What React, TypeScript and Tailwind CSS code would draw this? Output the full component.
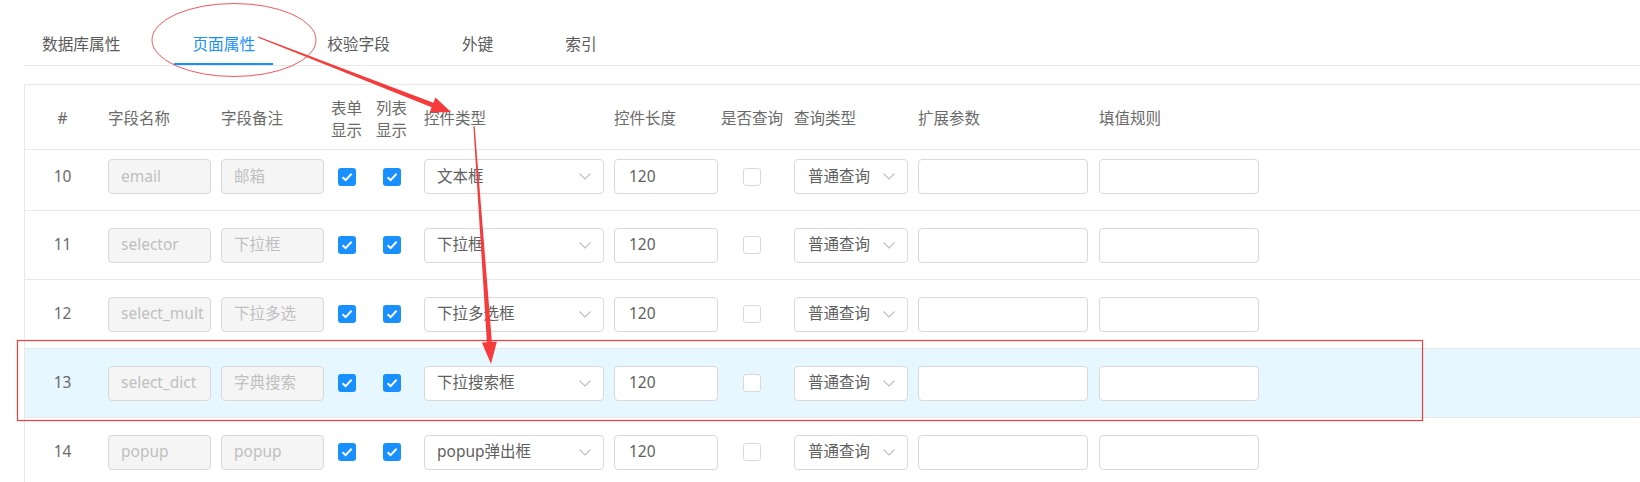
import React from "react";

type Row = { no: number; name: string; note: string; type: string; active?: boolean };

const rows: Row[] = [
  { no: 10, name: "email", note: "邮箱", type: "文本框" },
  { no: 11, name: "selector", note: "下拉框", type: "下拉框" },
  { no: 12, name: "select_mult", note: "下拉多选", type: "下拉多选框" },
  { no: 13, name: "select_dict", note: "字典搜索", type: "下拉搜索框", active: true },
  { no: 14, name: "popup", note: "popup", type: "popup弹出框" },
];

const tabs = ["数据库属性", "页面属性", "校验字段", "外键", "索引"];

function Check({ on }: { on: boolean }) {
  if (!on) return <span className="block h-[18px] w-[18px] rounded-[3px] border border-[#d9d9d9] bg-white" />;
  return (
    <span className="flex h-[18px] w-[18px] items-center justify-center rounded-[3px] bg-[#1890ff]">
      <svg width="12" height="10" viewBox="0 0 12 10">
        <path d="M1.6 5.2 4.6 8.1 10.6 1.8" fill="none" stroke="white" strokeWidth="2" />
      </svg>
    </span>
  );
}

function Arrow() {
  return (
    <svg width="12" height="7" viewBox="0 0 12 7" className="shrink-0">
      <polyline points="0.5,0.5 6,6 11.5,0.5" fill="none" stroke="#bfbfbf" strokeWidth="1.1" />
    </svg>
  );
}

function Box({ children, disabled, className = "" }: { children?: React.ReactNode; disabled?: boolean; className?: string }) {
  return (
    <div
      className={`flex h-[35px] items-center overflow-hidden whitespace-nowrap rounded-[4px] border border-[#d9d9d9] ${
        disabled ? "bg-[#f5f5f5] text-[#c0c0c0]" : "bg-white text-[#5f5f5f]"
      } ${className}`}
    >
      {children}
    </div>
  );
}

export default function App() {
  return (
    <div className="relative h-[482px] w-[1640px] overflow-hidden bg-white pl-[24px] pt-[23px] text-[15.5px] text-[#6a6a6a] font-['Noto_Sans','Noto_Sans_CJK_SC',sans-serif]">
      {/* tabs */}
      <div className="flex border-b border-[#e8e8e8]">
        {tabs.map((t, i) => (
          <div
            key={t}
            className={`relative mr-[36px] px-[18px] py-[9px] text-[15.7px] leading-[24px] ${i === 1 ? "text-[#1890ff]" : "text-[#5a5a5a]"}`}
          >
            {t}
            {i === 1 && <span className="absolute bottom-0 left-0 right-0 h-[2px] bg-[#1890ff]" />}
          </div>
        ))}
      </div>

      {/* table */}
      <div className="mt-[18px] border-l border-t border-[#e8e8e8]">
        <div className="flex h-[65px] items-center border-b border-[#e8e8e8] pt-[4px]">
          <div className="w-[75px] shrink-0 text-center">#</div>
          <div className="ml-[8px] w-[103px] shrink-0">字段名称</div>
          <div className="ml-[10px] w-[103px] shrink-0">字段备注</div>
          <div className="w-[45px] shrink-0 text-center leading-[22px]">表单<br />显示</div>
          <div className="w-[45px] shrink-0 text-center leading-[22px]">列表<br />显示</div>
          <div className="ml-[10px] w-[180px] shrink-0">控件类型</div>
          <div className="ml-[10px] w-[104px] shrink-0">控件长度</div>
          <div className="w-[68px] shrink-0 text-center">是否查询</div>
          <div className="ml-[8px] w-[114px] shrink-0">查询类型</div>
          <div className="ml-[10px] w-[170px] shrink-0">扩展参数</div>
          <div className="ml-[11px] w-[160px] shrink-0">填值规则</div>
        </div>

        {rows.map((r, i) => (
          <div
            key={r.no}
            className={`flex items-center border-b border-[#e8e8e8] ${i === 0 ? "h-[61px] pb-[7px]" : "h-[69px]"} ${
              r.active ? "bg-[#e6f7ff]" : "bg-white"
            }`}
          >
            <div className="w-[75px] shrink-0 text-center">{r.no}</div>
            <Box disabled className="ml-[8px] w-[103px] shrink-0 pl-[12px]">{r.name}</Box>
            <Box disabled className="ml-[10px] w-[103px] shrink-0 pl-[12px]">{r.note}</Box>
            <div className="flex w-[45px] shrink-0 justify-center"><Check on /></div>
            <div className="flex w-[45px] shrink-0 justify-center"><Check on /></div>
            <Box className="ml-[10px] w-[180px] shrink-0 justify-between pl-[12px] pr-[12px]">
              <span>{r.type}</span>
              <Arrow />
            </Box>
            <Box className="ml-[10px] w-[104px] shrink-0 pl-[14px]">120</Box>
            <div className="flex w-[68px] shrink-0 justify-center"><Check on={false} /></div>
            <Box className="ml-[8px] w-[114px] shrink-0 justify-between pl-[13px] pr-[12px]">
              <span>普通查询</span>
              <Arrow />
            </Box>
            <Box className="ml-[10px] w-[170px] shrink-0" />
            <Box className="ml-[11px] w-[160px] shrink-0" />
          </div>
        ))}
      </div>

      {/* annotations */}
      <svg className="pointer-events-none absolute left-0 top-0" width="1640" height="482">
        <ellipse cx="234" cy="40" rx="82" ry="36.5" fill="none" stroke="#ec5a5e" strokeWidth="1" />
        <polygon
          fill="#f53b3b"
          points="258.2,36.5 433.4,102.7 435.4,97.5 451,112 429.6,112.5 431.6,107.3 257.8,37.5"
        />
        <polygon
          fill="#f53b3b"
          points="474.6,126 491.9,341.9 496.9,341.6 491,364 481.9,342.6 486.9,342.3 473.4,126"
        />
        <rect x="17.5" y="340.5" width="1405" height="80" fill="none" stroke="#f03c3c" strokeWidth="1.2" />
      </svg>
    </div>
  );
}
